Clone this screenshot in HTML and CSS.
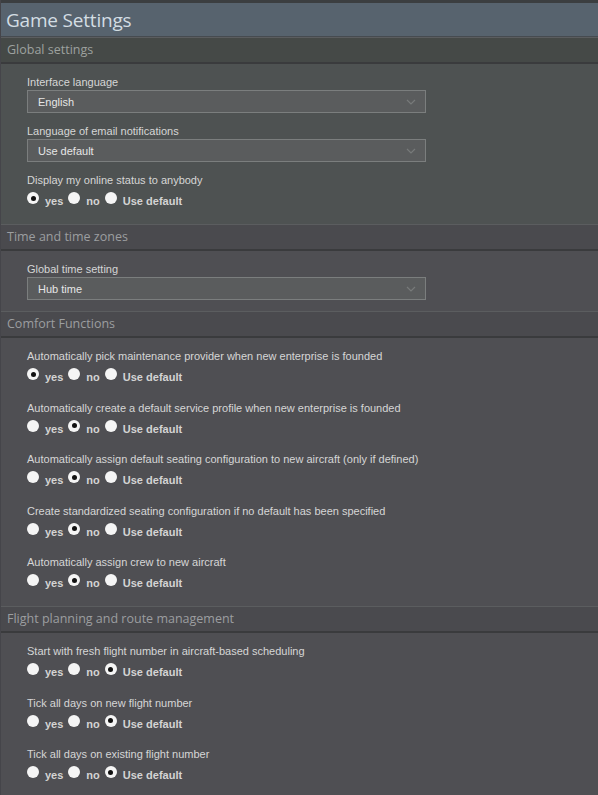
FILE: index.html
```html
<!DOCTYPE html>
<html>
<head>
<meta charset="utf-8">
<link rel="stylesheet" href="styles.css">
</head>
<body>
<div class="page">
  <div class="titlebar"><h1 class="title">Game Settings</h1></div>

  <section class="sec sec-green">
    <div class="sec-head">Global settings</div>
    <div class="sec-body">
      <div class="field">
        <div class="lbl">Interface language</div>
        <div class="select"><span>English</span><svg class="chev" viewBox="0 0 10 6" width="10" height="6"><path d="M1 1 L5 5 L9 1" fill="none" stroke="#777a7a" stroke-width="1.2"/></svg></div>
      </div>
      <div class="field">
        <div class="lbl">Language of email notifications</div>
        <div class="select"><span>Use default</span><svg class="chev" viewBox="0 0 10 6" width="10" height="6"><path d="M1 1 L5 5 L9 1" fill="none" stroke="#777a7a" stroke-width="1.2"/></svg></div>
      </div>
      <div class="field radio-field">
        <div class="lbl">Display my online status to anybody</div>
        <div class="radios"><span class="rb on"></span><b>yes</b><span class="rb"></span><b>no</b><span class="rb"></span><b>Use default</b></div>
      </div>
    </div>
  </section>

  <section class="sec">
    <div class="sec-head">Time and time zones</div>
    <div class="sec-body sb-time">
      <div class="field">
        <div class="lbl">Global time setting</div>
        <div class="select"><span>Hub time</span><svg class="chev" viewBox="0 0 10 6" width="10" height="6"><path d="M1 1 L5 5 L9 1" fill="none" stroke="#777a7a" stroke-width="1.2"/></svg></div>
      </div>
    </div>
  </section>

  <section class="sec">
    <div class="sec-head">Comfort Functions</div>
    <div class="sec-body">
      <div class="field radio-field">
        <div class="lbl">Automatically pick maintenance provider when new enterprise is founded</div>
        <div class="radios"><span class="rb on"></span><b>yes</b><span class="rb"></span><b>no</b><span class="rb"></span><b>Use default</b></div>
      </div>
      <div class="field radio-field">
        <div class="lbl">Automatically create a default service profile when new enterprise is founded</div>
        <div class="radios"><span class="rb"></span><b>yes</b><span class="rb on"></span><b>no</b><span class="rb"></span><b>Use default</b></div>
      </div>
      <div class="field radio-field">
        <div class="lbl">Automatically assign default seating configuration to new aircraft (only if defined)</div>
        <div class="radios"><span class="rb"></span><b>yes</b><span class="rb on"></span><b>no</b><span class="rb"></span><b>Use default</b></div>
      </div>
      <div class="field radio-field">
        <div class="lbl">Create standardized seating configuration if no default has been specified</div>
        <div class="radios"><span class="rb"></span><b>yes</b><span class="rb on"></span><b>no</b><span class="rb"></span><b>Use default</b></div>
      </div>
      <div class="field radio-field">
        <div class="lbl">Automatically assign crew to new aircraft</div>
        <div class="radios"><span class="rb"></span><b>yes</b><span class="rb on"></span><b>no</b><span class="rb"></span><b>Use default</b></div>
      </div>
    </div>
  </section>

  <section class="sec">
    <div class="sec-head">Flight planning and route management</div>
    <div class="sec-body">
      <div class="field radio-field">
        <div class="lbl">Start with fresh flight number in aircraft-based scheduling</div>
        <div class="radios"><span class="rb"></span><b>yes</b><span class="rb"></span><b>no</b><span class="rb on"></span><b>Use default</b></div>
      </div>
      <div class="field radio-field">
        <div class="lbl">Tick all days on new flight number</div>
        <div class="radios"><span class="rb"></span><b>yes</b><span class="rb"></span><b>no</b><span class="rb on"></span><b>Use default</b></div>
      </div>
      <div class="field radio-field">
        <div class="lbl">Tick all days on existing flight number</div>
        <div class="radios"><span class="rb"></span><b>yes</b><span class="rb"></span><b>no</b><span class="rb on"></span><b>Use default</b></div>
      </div>
    </div>
  </section>
</div>
</body>
</html>
```

FILE: styles.css
```css
html, body {
  margin: 0;
  padding: 0;
  background: #4f4f53;
}
body {
  font-family: "Liberation Sans", Arial, sans-serif;
}
.page {
  width: 598px;
  min-height: 795px;
  background: #4f4f53;
  border-left: 1px solid #45454a;
  box-sizing: border-box;
}
.titlebar {
  border-top: 3px solid #3b3e40;
  background: #57636e;
  height: 33px;
  border-bottom: 1px solid #464b50;
  display: flex;
  align-items: center;
}
.title {
  margin: 0 0 0 5px;
  font-family: "Open Sans", "Liberation Sans", sans-serif;
  font-weight: normal;
  font-size: 19px;
  color: #d3dde3;
  letter-spacing: -0.2px;
}
.sec-head {
  height: 24px;
  border-top: 1px solid #5b5d5f;
  border-bottom: 2px solid #3a3b3d;
  background: #4a4a4e;
  color: #9c9ea0;
  font-family: "Open Sans", "Liberation Sans", sans-serif;
  font-size: 12.5px;
  line-height: 24px;
  padding-left: 6px;
}
.sec-green .sec-head {
  background: #454947;
  color: #9da19f;
}
.sec-green .sec-body {
  background: #4e5252;
}
.sec-body {
  padding: 11px 0 15px 26px;
}
.sb-time {
  padding-bottom: 11px;
}
.field {
  margin-bottom: 11px;
}
.radio-field {
  margin-bottom: 15.5px;
}
.field:last-child {
  margin-bottom: 0;
}
.lbl {
  font-size: 11px;
  line-height: 14px;
  color: #d6d6d6;
}
.select {
  margin-top: 1px;
  width: 399px;
  height: 23px;
  box-sizing: border-box;
  border: 1px solid #7b7e7e;
  background: #5a5c5d;
  color: #e6e6e6;
  font-size: 11px;
  display: flex;
  align-items: center;
  justify-content: space-between;
  padding: 0 9px 0 10px;
}
.chev {
  display: block;
}
.radios {
  margin-top: 2px;
  height: 20px;
  display: flex;
  align-items: center;
}
.radios b {
  font-size: 11px;
  color: #d4d4d4;
  margin: 4px 5px 0 6px;
}
.rb {
  width: 12px;
  height: 12px;
  border-radius: 50%;
  background: #f5f5f5;
  position: relative;
  margin-top: -2px;
  flex: none;
}
.rb.on::after {
  content: "";
  position: absolute;
  left: 3.5px;
  top: 3.5px;
  width: 5px;
  height: 5px;
  border-radius: 50%;
  background: #111;
}
```
